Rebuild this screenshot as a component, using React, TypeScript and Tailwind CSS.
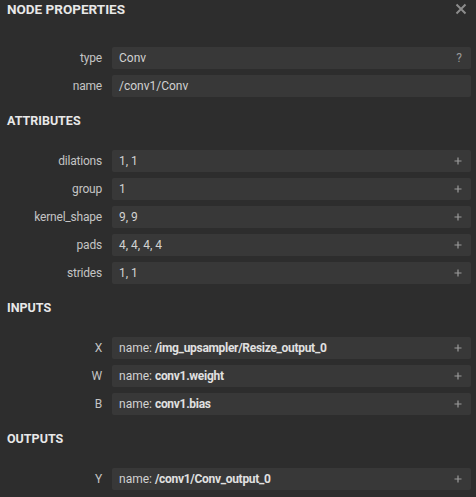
import React from "react";

const Plus = () => (
  <svg width="8" height="8" viewBox="0 0 8 8" className="shrink-0">
    <path d="M4 0.5V7.5M0.5 4H7.5" stroke="#9a9a9a" strokeWidth="1.2" />
  </svg>
);

type RowProps = { label: string; children: React.ReactNode; icon?: "plus" | "q" | "none" };

const Row = ({ label, children, icon = "plus" }: RowProps) => (
  <div className="flex items-center h-[22px]">
    <div className="w-[102px] text-right text-[12px] text-[#c4c4c4] shrink-0 tracking-[-0.2px]">{label}</div>
    <div className="ml-[10px] mr-[5px] flex-1 h-[22px] bg-[#383838] rounded-[2px] flex items-center pl-[7px] pr-[9px]">
      <div className="flex-1 text-[12px] text-[#d2d2d2] whitespace-nowrap">{children}</div>
      {icon === "plus" ? (
        <Plus />
      ) : icon === "q" ? (
        <span className="text-[12px] text-[#9a9a9a] leading-none">?</span>
      ) : null}
    </div>
  </div>
);

const Section = ({ title }: { title: string }) => (
  <div className="h-[18px] flex items-center pl-[7px] text-[12.5px] font-bold text-[#e8e8e8] mt-[15px] mb-[20px]">
    {title}
  </div>
);

const Name = ({ v }: { v: string }) => (
  <>
    name: <span className="font-bold text-[#e0e0e0] tracking-[-0.3px]">{v}</span>
  </>
);

export default function App() {
  return (
    <div
      className="w-[476px] h-[497px] bg-[#2d2d2d] overflow-hidden"
      style={{ fontFamily: 'Roboto, "Noto Sans", sans-serif' }}
    >
      <div className="h-[18px] flex items-center justify-between pl-[7px] pr-[9px]">
        <span className="text-[13.5px] font-bold text-[#e8e8e8]">NODE PROPERTIES</span>
        <svg width="12" height="12" viewBox="0 0 12 12">
          <path d="M1.5 1.5L10.5 10.5M10.5 1.5L1.5 10.5" stroke="#8c8c8c" strokeWidth="2" />
        </svg>
      </div>
      <div className="mt-[29px] flex flex-col gap-[6px]">
        <Row label="type" icon="q">Conv</Row>
        <Row label="name" icon="none">/conv1/Conv</Row>
      </div>
      <Section title="ATTRIBUTES" />
      <div className="flex flex-col gap-[6px]">
        <Row label="dilations">1, 1</Row>
        <Row label="group">1</Row>
        <Row label="kernel_shape">9, 9</Row>
        <Row label="pads">4, 4, 4, 4</Row>
        <Row label="strides">1, 1</Row>
      </div>
      <Section title="INPUTS" />
      <div className="flex flex-col gap-[6px]">
        <Row label="X"><Name v="/img_upsampler/Resize_output_0" /></Row>
        <Row label="W"><Name v="conv1.weight" /></Row>
        <Row label="B"><Name v="conv1.bias" /></Row>
      </div>
      <Section title="OUTPUTS" />
      <div className="flex flex-col gap-[6px]">
        <Row label="Y"><Name v="/conv1/Conv_output_0" /></Row>
      </div>
    </div>
  );
}
